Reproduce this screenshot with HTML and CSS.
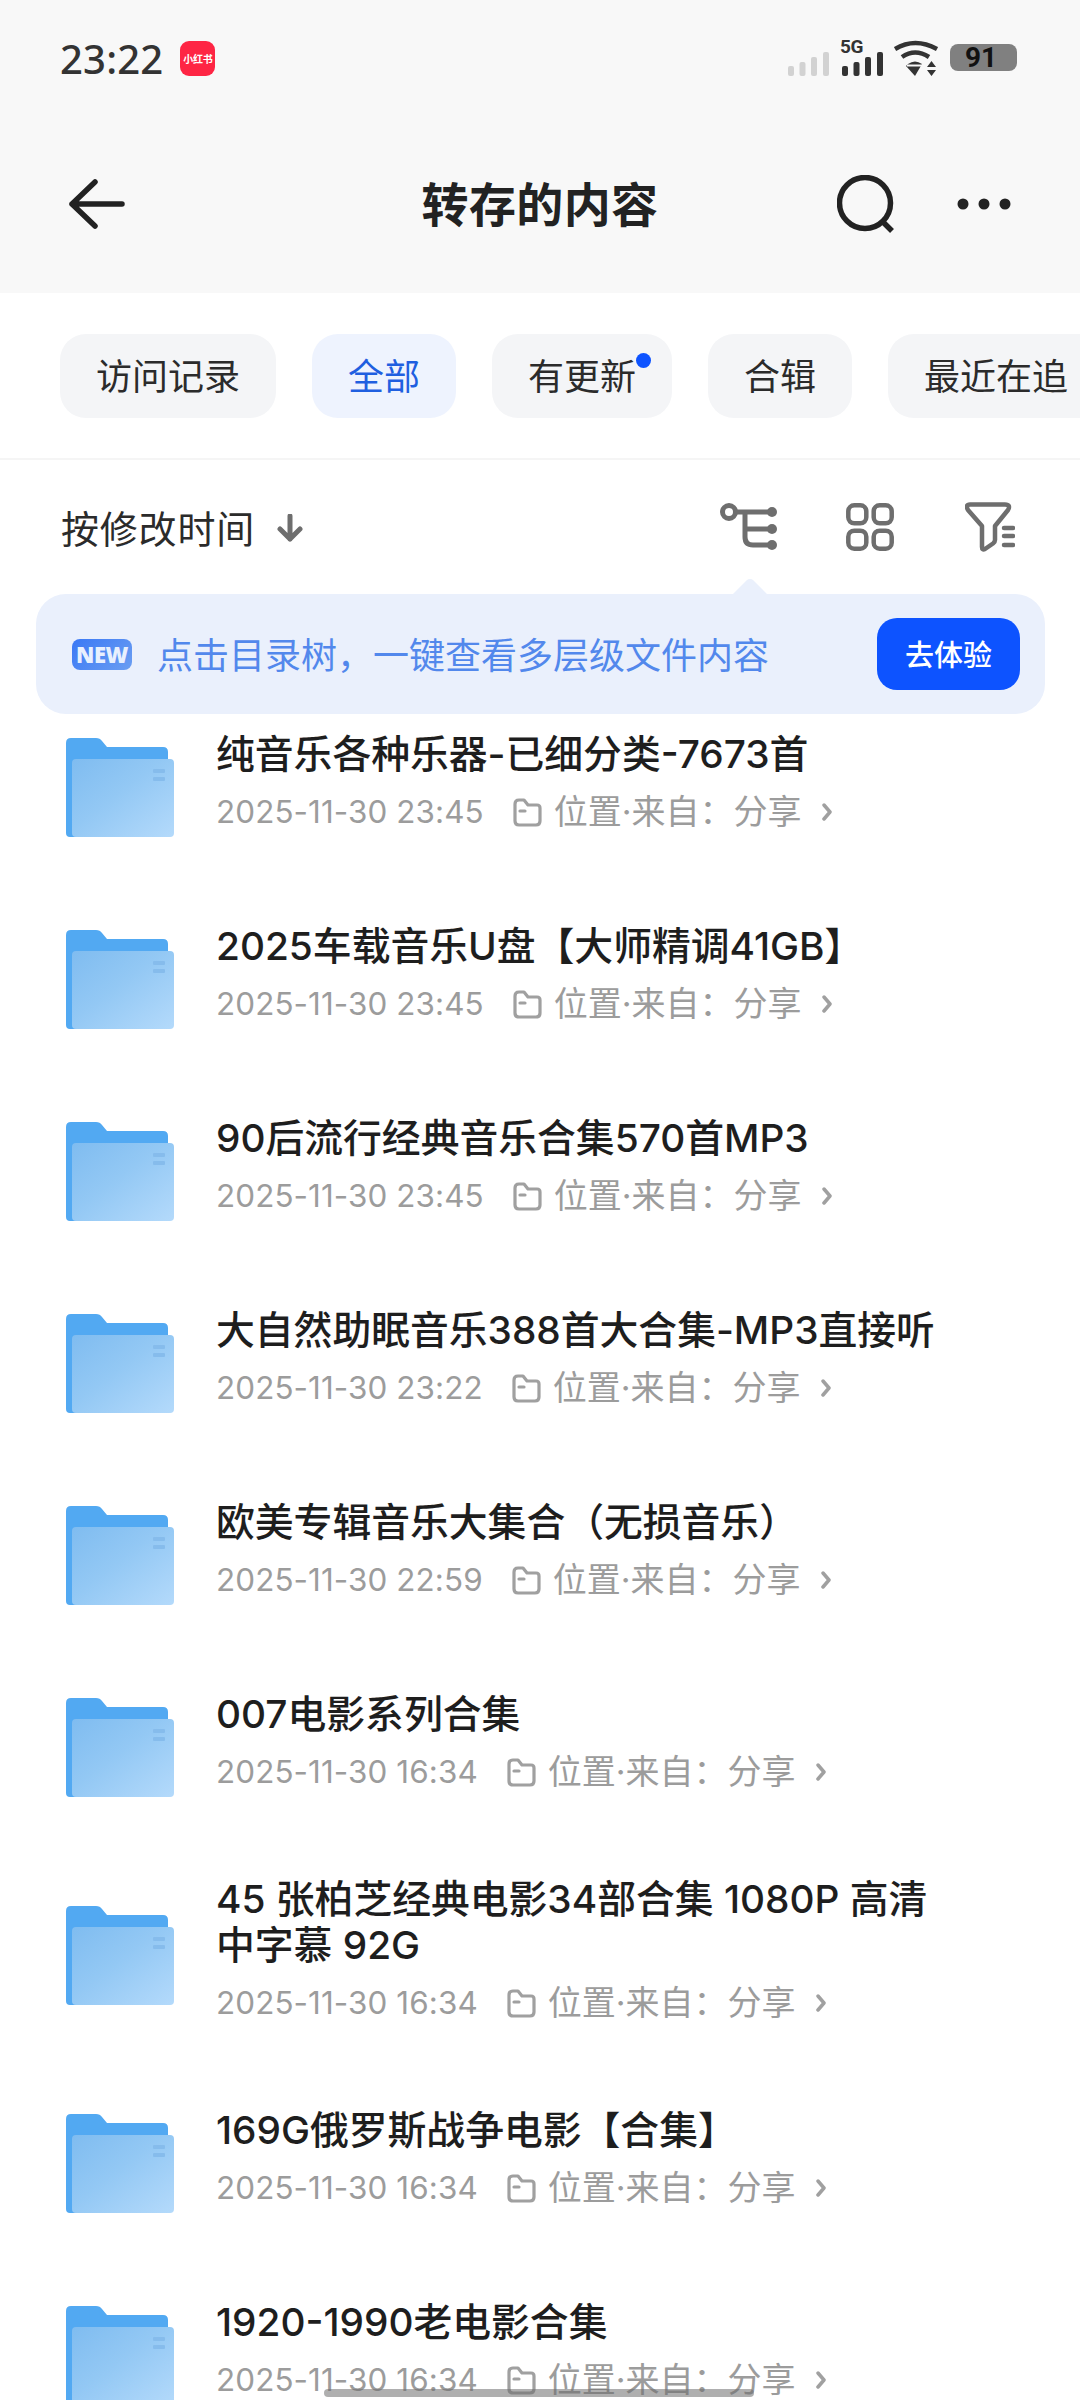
FILE: index.html
```html
<!DOCTYPE html>
<html lang="zh">
<head>
<meta charset="utf-8">
<title>转存的内容</title>
<link rel="stylesheet" href="styles.css">
</head>
<body>
<svg class="defs" width="0" height="0">
  <defs>
    <linearGradient id="fg" x1="0" y1="0" x2="1" y2="1">
      <stop offset="0" stop-color="#7fbcf0"/>
      <stop offset="0.45" stop-color="#93c8f4"/>
      <stop offset="1" stop-color="#b4dafb"/>
    </linearGradient>
    <symbol id="folder" viewBox="0 0 108 99">
      <path d="M0 5Q0 0 5 0H30Q34 0 36 3L41 9H97Q102 9 102 14V99H4Q0 99 0 95Z" fill="#52a9f2"/>
      <rect x="6" y="21" width="102" height="78" rx="4" fill="url(#fg)"/>
      <rect x="87" y="31" width="12" height="4" rx="1" fill="#86bcec"/>
      <rect x="87" y="39" width="12" height="4" rx="1" fill="#86bcec"/>
    </symbol>
    <symbol id="loc" viewBox="0 0 29 29">
      <path d="M2 6Q2 2 6 2H11L15 7H24Q27 7 27 10V23Q27 27 23 27H6Q2 27 2 23Z M7 13H12" fill="none" stroke="#a0a0a0" stroke-width="3.200" stroke-linejoin="round" stroke-linecap="round"/>
    </symbol>
    <symbol id="chev" viewBox="0 0 10 18">
      <path d="M2 2L8 9L2 16" fill="none" stroke="#a0a0a0" stroke-width="3.500" stroke-linecap="round" stroke-linejoin="round"/>
    </symbol>
  </defs>
</svg>
<div class="screen">
  <header class="top">
    <div class="status">
      <span class="time">23:22</span>
      <span class="rednote">小红书</span>
      <div class="status-right">
        <svg class="sig" width="41" height="24" viewBox="0 0 41 24" fill="#d2d2d2">
          <rect x="0" y="14" width="6" height="10" rx="2"/><rect x="11.500" y="10" width="6" height="14" rx="2"/><rect x="23" y="5" width="6" height="19" rx="2"/><rect x="35" y="0" width="6" height="24" rx="2"/>
        </svg>
        <div class="sig5g">
          <span class="fiveg">5G</span>
          <svg class="sig" width="41" height="24" viewBox="0 0 41 24" fill="#333">
            <rect x="0" y="14" width="6" height="10" rx="2"/><rect x="11.500" y="10" width="6" height="14" rx="2"/><rect x="23" y="5" width="6" height="19" rx="2"/><rect x="35" y="0" width="6" height="24" rx="2"/>
          </svg>
        </div>
        <svg class="wifi" width="44" height="36" viewBox="0 0 44 36">
          <path d="M1 9Q21 -3 43 9M8 17Q21 8 35 17" fill="none" stroke="#333" stroke-width="4.500"/>
          <path d="M14 24Q21 19 28 24L21 36L12 26Z" fill="#333"/>
          <path d="M33 27H42L37.500 21ZM33 30H42L37.500 36Z" fill="#333"/>
          <path d="M13 25.500L28 25.500" stroke="#f8f8f8" stroke-width="2"/>
        </svg>
        <div class="battery">91</div>
      </div>
    </div>
    <nav class="nav">
      <svg class="back" width="56" height="50" viewBox="0 0 56 50">
        <path d="M53 25H3M26 3L3 25L26 47" fill="none" stroke="#222" stroke-width="5.500" stroke-linecap="round" stroke-linejoin="round"/>
      </svg>
      <h1 class="title">转存的内容</h1>
      <div class="nav-right">
        <svg width="58" height="58" viewBox="0 0 58 58">
          <circle cx="28" cy="28" r="25.500" fill="none" stroke="#222" stroke-width="5.500"/>
          <path d="M44 45L55 56" stroke="#222" stroke-width="5.500"/>
        </svg>
        <svg width="54" height="12" viewBox="0 0 54 12" fill="#222">
          <circle cx="6" cy="6" r="5.500"/><circle cx="27" cy="6" r="5.500"/><circle cx="48" cy="6" r="5.500"/>
        </svg>
      </div>
    </nav>
  </header>

  <section class="tabs">
    <span class="tab">访问记录</span>
    <span class="tab active">全部</span>
    <span class="tab dotted">有更新</span>
    <span class="tab">合辑</span>
    <span class="tab">最近在追</span>
  </section>

  <section class="sortbar">
    <div class="sort">
      <span>按修改时间</span>
      <svg width="26" height="28" viewBox="0 0 26 28">
        <path d="M13 2V25M3 15L13 25L23 15" fill="none" stroke="#6e6e6e" stroke-width="5" stroke-linecap="round" stroke-linejoin="round"/>
      </svg>
    </div>
    <div class="tools">
      <svg class="tool" width="57" height="48" viewBox="0 0 57 48" fill="none" stroke="#6e6e6e" stroke-width="5" stroke-linecap="round">
        <circle cx="9" cy="9" r="6.500"/>
        <path d="M16 9H52M25 9V34Q25 42 33 42H52M25 26H52"/>
        <g fill="#6e6e6e" stroke="none"><circle cx="52" cy="9" r="5"/><circle cx="52" cy="26" r="5"/><circle cx="52" cy="42" r="5"/></g>
      </svg>
      <svg class="tool" width="48" height="48" viewBox="0 0 48 48" fill="none" stroke="#6e6e6e" stroke-width="4.500">
        <rect x="2.300" y="2.300" width="18" height="18" rx="6"/><rect x="27.700" y="2.300" width="18" height="18" rx="6"/>
        <rect x="2.300" y="27.700" width="18" height="18" rx="6"/><rect x="27.700" y="27.700" width="18" height="18" rx="6"/>
      </svg>
      <svg class="tool" width="50" height="50" viewBox="0 0 50 50" fill="none" stroke="#6e6e6e" stroke-width="4.500" stroke-linecap="round" stroke-linejoin="round">
        <path d="M5 2.500H40Q46 2.500 43 8L30 24V38Q30 40 28 41.500L20 47Q17 48.500 17 45V24L3 8Q0 2.500 5 2.500Z"/>
        <path d="M39 26H48M39 34H48M39 43H48"/>
      </svg>
    </div>
  </section>

  <main class="content">
    <div class="banner">
      <span class="new">NEW</span>
      <span class="banner-text">点击目录树，一键查看多层级文件内容</span>
      <button class="try">去体验</button>
    </div>
    <ul class="list">
      <li class="row"><svg class="ficon"><use href="#folder"/></svg><div class="info"><div class="name">纯音乐各种乐器-已细分类-7673首</div><div class="meta"><span class="date">2025-11-30 23:45</span><svg class="loc"><use href="#loc"/></svg><span>位置·来自：分享</span><svg class="chev"><use href="#chev"/></svg></div></div></li>
      <li class="row"><svg class="ficon"><use href="#folder"/></svg><div class="info"><div class="name">2025车载音乐U盘【大师精调41GB】</div><div class="meta"><span class="date">2025-11-30 23:45</span><svg class="loc"><use href="#loc"/></svg><span>位置·来自：分享</span><svg class="chev"><use href="#chev"/></svg></div></div></li>
      <li class="row"><svg class="ficon"><use href="#folder"/></svg><div class="info"><div class="name">90后流行经典音乐合集570首MP3</div><div class="meta"><span class="date">2025-11-30 23:45</span><svg class="loc"><use href="#loc"/></svg><span>位置·来自：分享</span><svg class="chev"><use href="#chev"/></svg></div></div></li>
      <li class="row"><svg class="ficon"><use href="#folder"/></svg><div class="info"><div class="name">大自然助眠音乐388首大合集-MP3直接听</div><div class="meta"><span class="date">2025-11-30 23:22</span><svg class="loc"><use href="#loc"/></svg><span>位置·来自：分享</span><svg class="chev"><use href="#chev"/></svg></div></div></li>
      <li class="row"><svg class="ficon"><use href="#folder"/></svg><div class="info"><div class="name">欧美专辑音乐大集合（无损音乐）</div><div class="meta"><span class="date">2025-11-30 22:59</span><svg class="loc"><use href="#loc"/></svg><span>位置·来自：分享</span><svg class="chev"><use href="#chev"/></svg></div></div></li>
      <li class="row"><svg class="ficon"><use href="#folder"/></svg><div class="info"><div class="name">007电影系列合集</div><div class="meta"><span class="date">2025-11-30 16:34</span><svg class="loc"><use href="#loc"/></svg><span>位置·来自：分享</span><svg class="chev"><use href="#chev"/></svg></div></div></li>
      <li class="row tall"><svg class="ficon"><use href="#folder"/></svg><div class="info"><div class="name">45 张柏芝经典电影34部合集 1080P 高清中字慕 92G</div><div class="meta"><span class="date">2025-11-30 16:34</span><svg class="loc"><use href="#loc"/></svg><span>位置·来自：分享</span><svg class="chev"><use href="#chev"/></svg></div></div></li>
      <li class="row"><svg class="ficon"><use href="#folder"/></svg><div class="info"><div class="name">169G俄罗斯战争电影【合集】</div><div class="meta"><span class="date">2025-11-30 16:34</span><svg class="loc"><use href="#loc"/></svg><span>位置·来自：分享</span><svg class="chev"><use href="#chev"/></svg></div></div></li>
      <li class="row"><svg class="ficon"><use href="#folder"/></svg><div class="info"><div class="name">1920-1990老电影合集</div><div class="meta"><span class="date">2025-11-30 16:34</span><svg class="loc"><use href="#loc"/></svg><span>位置·来自：分享</span><svg class="chev"><use href="#chev"/></svg></div></div></li>
    </ul>
  </main>
  <div class="homebar"></div>
</div>
</body>
</html>
```
FILE: styles.css
```css
* { box-sizing: border-box; }
html, body { margin: 0; padding: 0; background: #fff; }
body { font-family: "Noto Sans CJK SC", "Noto Sans", sans-serif; color: #222; }
.defs { position: absolute; }
.screen { position: relative; width: 1080px; height: 2400px; overflow: hidden; background: #fff; }

.top { background: #f8f8f8; height: 293px; }
.status { height: 116px; display: flex; align-items: center; padding: 0 63px 0 60px; }
.time { font-family: "Noto Sans", sans-serif; font-size: 40px; font-weight: 500; color: #333; letter-spacing: 0.2px; }
.rednote { margin-left: 17px; width: 35px; height: 35px; border-radius: 9px; background: #fe2544; color: #fff; font-size: 10px; font-weight: 700; display: flex; align-items: center; justify-content: center; white-space: nowrap; letter-spacing: -0.3px; }
.status-right { margin-left: auto; height: 116px; padding-bottom: 40px; display: flex; align-items: flex-end; }
.sig5g { position: relative; margin-left: 13px; display: flex; }
.fiveg { position: absolute; left: -2px; top: -14px; font-family: Roboto, sans-serif; font-weight: 700; font-size: 19px; line-height: 17px; letter-spacing: -0.5px; color: #333; }
.wifi { margin-left: 11px; }
.battery { margin-left: 12px; margin-bottom: 5px; width: 67px; height: 27px; border-radius: 8px; background: #808080; color: #111; font-family: Roboto, sans-serif; font-size: 28px; font-weight: 700; line-height: 27px; padding-left: 15px; }

.nav { height: 177px; padding: 0 69px 1px 69px; display: grid; grid-template-columns: 1fr auto 1fr; align-items: center; }
.title { margin: 0 0 5px; font-size: 47px; font-weight: 700; color: #222; line-height: 60px; letter-spacing: 0.4px; }
.nav-right { justify-self: end; display: flex; align-items: center; gap: 62px; }

.tabs { height: 167px; padding: 41px 0 0 60px; display: flex; align-items: flex-start; gap: 36px; overflow: hidden; border-bottom: 2px solid #f5f5f5; }
.tab { flex: none; height: 84px; padding: 0 36px; border-radius: 26px; background: #f4f5f7; font-size: 36px; line-height: 80px; color: #2b2b2b; position: relative; }
.tab.active { background: #eef3fe; color: #1f5fe0; }
.dotted::after { content: ""; position: absolute; right: 21px; top: 19px; width: 15px; height: 15px; border-radius: 50%; background: #0d53ff; }

.sortbar { height: 134px; padding: 0 65px 2px 61px; display: flex; align-items: center; justify-content: space-between; }
.sort { display: flex; align-items: center; gap: 22px; font-size: 38px; color: #2b2b2b; letter-spacing: 0.8px; }
.sort svg { margin-top: 4px; }
.tools { display: flex; align-items: center; margin-top: 2px; }
.tool { flex: none; }
.tool:nth-child(2) { margin-left: 69px; }
.tool:nth-child(3) { margin-left: 71px; }

.content { position: relative; }
.banner { position: absolute; left: 36px; top: 0; z-index: 2; width: 1009px; height: 120px; border-radius: 30px; background: #eaf0fc; display: flex; align-items: center; padding: 0 25px 0 36px; }
.banner::before { content: ""; position: absolute; left: 702px; top: -12px; width: 24px; height: 24px; background: #eaf0fc; transform: rotate(45deg); border-radius: 5px 0 0 0; }
.new { width: 60px; height: 31px; border-radius: 8px; background: linear-gradient(135deg, #3a78f5, #6b9ef2); color: #e8f0fe; font-family: "Noto Sans", sans-serif; font-size: 22px; font-weight: 900; line-height: 31px; text-align: center; letter-spacing: -0.5px; }
.banner-text { margin-left: 25px; margin-top: -2px; font-size: 36px; color: #5288ec; white-space: nowrap; }
.try { margin-left: auto; width: 143px; height: 72px; border: 0; border-radius: 20px; background: #0d53ff; color: #fff; font-family: inherit; font-size: 29px; font-weight: 500; padding: 0 0 2px; }

.list { list-style: none; margin: 0; padding: 97px 0 0; }
.row { height: 192px; display: flex; align-items: center; padding-left: 66px; }
.row.tall { height: 224px; }
.ficon { flex: none; width: 108px; height: 99px; }
.info { margin-left: 42px; width: 730px; margin-top: -8px; }
.name { font-family: Inter, "Noto Sans CJK SC", sans-serif; font-size: 38.800px; font-weight: 500; line-height: 46px; color: #1e1e1e; }
.meta { margin-top: 12px; height: 46px; display: flex; align-items: center; font-family: Inter, "Noto Sans CJK SC", sans-serif; font-size: 34px; line-height: 46px; color: #9c9c9c; white-space: nowrap; }
.date { font-size: 31.400px; letter-spacing: 0.1px; }
.loc { flex: none; width: 29px; height: 29px; margin: 0 12px 0 29px; }
.chev { flex: none; width: 10px; height: 18px; margin-left: 20px; }

.homebar { position: absolute; left: 324px; top: 2389px; width: 430px; height: 8px; border-radius: 4px; background: rgba(110,110,110,0.55); }
```
